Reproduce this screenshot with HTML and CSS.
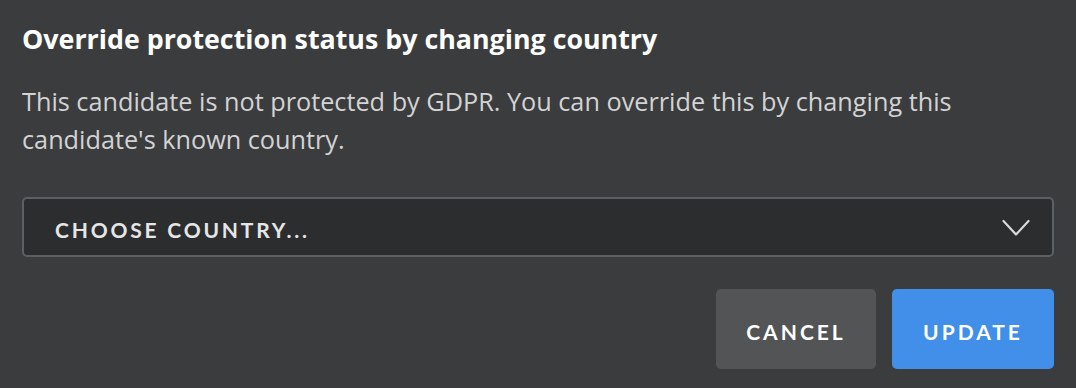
FILE: index.html
```html
<!DOCTYPE html>
<html lang="en">
<head>
<meta charset="utf-8">
<title>Override protection status</title>
<link rel="stylesheet" href="styles.css">
</head>
<body>
<div class="dialog">
  <h1 class="title">Override protection status by changing country</h1>
  <p class="desc">This candidate is not protected by GDPR. You can override this by changing this<br>candidate's known country.</p>
  <div class="select">
    <span class="select-label">Choose country...</span>
    <svg class="chevron" width="28" height="18" viewBox="0 0 28 18" aria-hidden="true"><path d="M1.5 2 L14 15.5 L26.5 2" fill="none" stroke="#d9d9d9" stroke-width="2.2" stroke-linecap="round" stroke-linejoin="round"/></svg>
  </div>
  <div class="actions">
    <button class="btn btn-cancel">Cancel</button>
    <button class="btn btn-update">Update</button>
  </div>
</div>
</body>
</html>
```
FILE: styles.css
```css
html, body {
  margin: 0;
  padding: 0;
  background: #3b3c3e;
}
body {
  font-family: "Open Sans", "Noto Sans", sans-serif;
}
.dialog {
  padding: 21px 22px 0 22px;
  display: flex;
  flex-direction: column;
}
.title {
  margin: 0;
  font-size: 26.8px;
  line-height: 36px;
  font-weight: 700;
  color: #ffffff;
  white-space: nowrap;
}
.desc {
  margin: 26px 0 0 0;
  font-size: 25.25px;
  line-height: 37.6px;
  color: #d3d3d4;
  white-space: nowrap;
}
.select {
  margin-top: 39px;
  height: 60px;
  box-sizing: border-box;
  border: 2px solid #596066;
  border-radius: 5px;
  background: #2c2d2f;
  display: flex;
  align-items: center;
  justify-content: space-between;
  padding: 0 22px 0 31px;
}
.select-label {
  font-family: Lato, "Open Sans", sans-serif;
  font-size: 21px;
  font-weight: 700;
  letter-spacing: 2.8px;
  text-transform: uppercase;
  color: #e6e6e7;
  padding-top: 4px;
}
.chevron {
  display: block;
  margin-top: 1px;
}
.actions {
  margin-top: 32px;
  display: flex;
  justify-content: flex-end;
  gap: 16px;
}
.btn {
  height: 80px;
  border: none;
  border-radius: 5px;
  font-family: Lato, "Open Sans", sans-serif;
  font-size: 21px;
  font-weight: 700;
  letter-spacing: 3px;
  text-transform: uppercase;
  color: #ffffff;
  padding: 4px 0 0 0;
}
.btn-cancel {
  width: 160px;
  background: #535456;
}
.btn-update {
  width: 162px;
  background: #418fe8;
}
```
